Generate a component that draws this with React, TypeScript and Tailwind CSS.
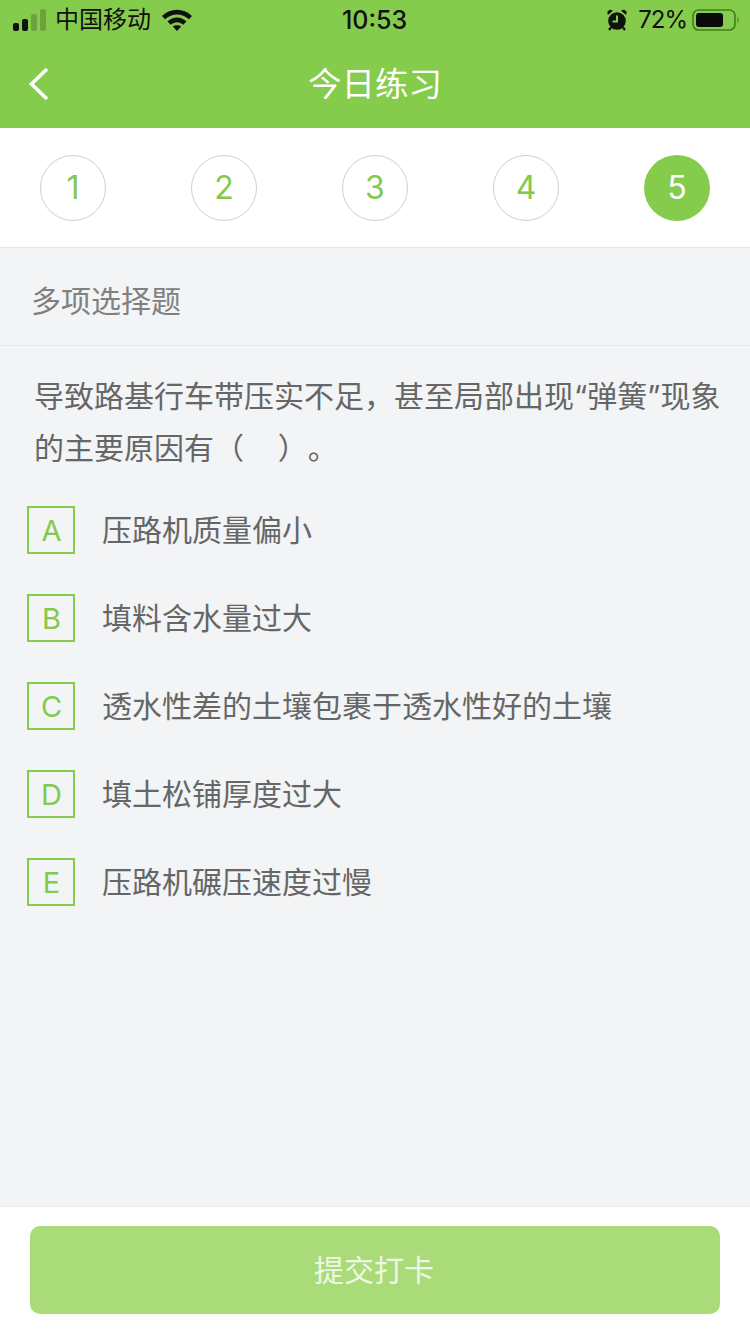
const font = "font-['Inter','Noto_Sans_CJK_SC',sans-serif]";

function Signal() {
  return (
    <svg width="34" height="22" viewBox="0 0 34 22">
      <rect x="0" y="14" width="6" height="8" rx="2" fill="#111" />
      <rect x="9" y="10" width="6" height="12" rx="2" fill="#111" />
      <rect x="18" y="5" width="6" height="17" rx="2" fill="#111" opacity=".22" />
      <rect x="27" y="0" width="6" height="22" rx="2" fill="#111" opacity=".22" />
    </svg>
  );
}

function Wifi() {
  return (
    <svg width="30" height="22" viewBox="0 0 30 22">
      <path d="M0 7C8.500 -1.500 21.500 -1.500 30 7L27 10.300C20 3.800 10 3.800 3 10.300Z" fill="#111" />
      <path d="M5.500 12.500C11 7.300 19 7.300 24.500 12.500L21.300 15.800C17.300 12.300 12.700 12.300 8.700 15.800Z" fill="#111" />
      <path d="M10.800 17.600C13.300 15.700 16.700 15.700 19.200 17.600L15 22Z" fill="#111" />
    </svg>
  );
}

function Alarm() {
  return (
    <svg width="20" height="22" viewBox="0 0 20 22">
      <circle cx="10" cy="12" r="8.800" fill="#111" />
      <path d="M10 6.500V12.500H5.500" stroke="#86cd4c" strokeWidth="2" fill="none" />
      <path d="M0.800 6L6 1.800L3 0.500L0.300 2.800Z M19.200 6L14 1.800L17 0.500L19.700 2.800Z" fill="#111" />
      <path d="M4 18.500L2 21M16 18.500L18 21" stroke="#111" strokeWidth="2.200" />
    </svg>
  );
}

function Battery() {
  return (
    <svg width="48" height="24" viewBox="0 0 48 24">
      <rect x="1" y="2" width="42" height="20" rx="5.500" fill="none" stroke="#3f7f1e" strokeWidth="1.600" />
      <rect x="4" y="5" width="27" height="14" rx="3" fill="#0a0a0a" />
      <path d="M45.500 9C47 9.500 47 14.500 45.500 15Z" fill="#3f7f1e" />
    </svg>
  );
}

function StepCircle({ n, active }: { n: number; active?: boolean }) {
  return (
    <div
      className={
        active
          ? "flex h-[66px] w-[66px] items-center justify-center rounded-full bg-[#86cc4c] text-[32px] text-white"
          : "flex h-[66px] w-[66px] items-center justify-center rounded-full border border-[#cfcfcf] bg-white text-[32px] text-[#84c94d]"
      }
    >
      {n}
    </div>
  );
}

function Option({ letter, text }: { letter: string; text: string }) {
  return (
    <div className="flex h-[88px] items-center pl-[27px]">
      <div className="flex h-[48px] w-[48px] items-center justify-center border-2 border-[#86cc4c] pl-[1px] pt-[2px] text-[29px] text-[#84c94d]">
        {letter}
      </div>
      <div className="ml-[27px] text-[30px] leading-[40px] text-[#666666]">{text}</div>
    </div>
  );
}

export default function App() {
  const options = [
    ["A", "压路机质量偏小"],
    ["B", "填料含水量过大"],
    ["C", "透水性差的土壤包裹于透水性好的土壤"],
    ["D", "填土松铺厚度过大"],
    ["E", "压路机碾压速度过慢"],
  ];
  return (
    <div className={`${font} flex h-[1334px] w-[750px] flex-col overflow-hidden bg-[#f2f4f6]`}>
      <div className="h-[128px] shrink-0 bg-[#86cc4c]">
        <div className="flex h-[40px] items-center justify-between pl-[13px] pr-[10px] text-[#111]">
          <div className="flex w-[260px] items-center">
            <Signal />
            <span className="ml-[8px] text-[24px] leading-[30px]">中国移动</span>
            <span className="ml-[11px]"><Wifi /></span>
          </div>
          <div className="mr-[4px] text-[25px] font-medium leading-[30px]">10:53</div>
          <div className="flex w-[260px] items-center justify-end">
            <Alarm />
            <span className="ml-[11px] mr-[5px] text-[24px] leading-[30px] tracking-[-1px]">72%</span>
            <Battery />
          </div>
        </div>
        <div className="flex h-[88px] items-center">
          <div className="w-[28px]" />
          <svg width="22" height="34" viewBox="0 0 22 34" fill="none">
            <path d="M19 2L3.500 17L19 32" stroke="#fff" strokeWidth="3.600" />
          </svg>
          <div className="ml-[-50px] flex-1 text-center text-[33.500px] leading-[44px] text-white">今日练习</div>
        </div>
      </div>

      <div className="flex h-[120px] shrink-0 items-center justify-between border-b border-[#e6e6e6] bg-white px-[40px] pt-[1px]">
        {[1, 2, 3, 4, 5].map((n) => (
          <StepCircle key={n} n={n} active={n === 5} />
        ))}
      </div>

      <div className="flex h-[98px] shrink-0 items-center border-b border-[#e6e8ea] pl-[31px] pt-[10px] text-[30px] text-[#808080]">
        多项选择题
      </div>

      <div className="flex-1">
        <div className="pl-[34px] pr-[20px] pt-[24px] text-[30px] leading-[52px] text-[#666666] [text-spacing-trim:space-all]">
          导致路基行车带压实不足，甚至局部出现“弹簧”现象的主要原因有（&nbsp;&nbsp;&nbsp;&nbsp;）。
        </div>
        <div className="pt-[12px]">
          {options.map(([l, t]) => (
            <Option key={l} letter={l} text={t} />
          ))}
        </div>
      </div>

      <div className="flex h-[128px] shrink-0 justify-center border-t border-[#e8e8e8] bg-white pt-[19px]">
        <div className="flex h-[88px] w-[690px] items-center justify-center rounded-[10px] bg-[#a9dc78] pr-[2px] text-[30px] text-[#eef8e4]">
          提交打卡
        </div>
      </div>
    </div>
  );
}
